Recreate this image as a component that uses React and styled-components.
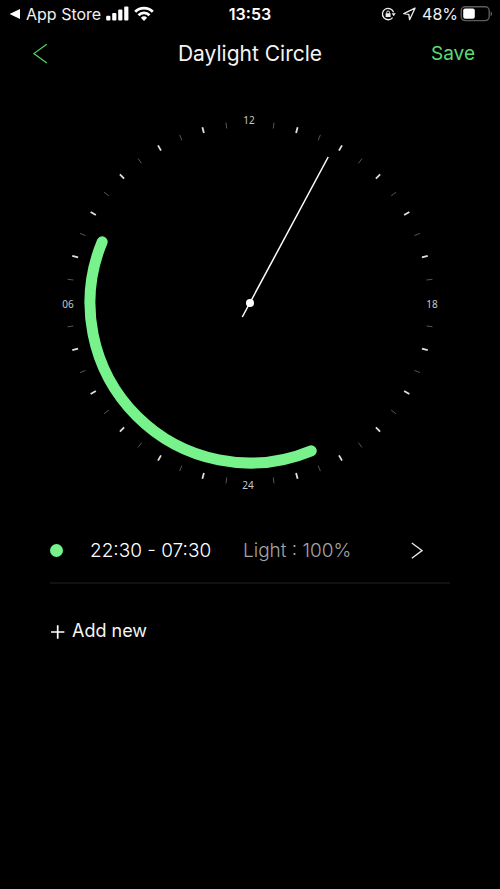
import React from 'react';
import styled, { createGlobalStyle } from 'styled-components';

const GREEN = '#78f28a';
const CENTER = 200;
const ARC_RADIUS = 160;
// the scale is slightly wider than it is tall
const SCALE_X = 181;
const SCALE_Y = 179;

const GlobalStyle = createGlobalStyle`
  * {
    box-sizing: border-box;
  }

  body {
    margin: 0;
    background: #000;
    color: #fff;
    font-family: Inter, 'Liberation Sans', sans-serif;
  }
`;

const Screen = styled.div`
  display: flex;
  flex-direction: column;
  min-height: 100vh;
`;

const StatusBar = styled.div`
  display: grid;
  grid-template-columns: 1fr auto 1fr;
  align-items: center;
  height: 28px;
  padding: 0 8px;
  font-size: 16px;
  line-height: 20px;
`;

const StatusGroup = styled.div`
  display: flex;
  align-items: center;
  justify-content: ${(props) => (props.$end ? 'flex-end' : 'flex-start')};
  gap: ${(props) => (props.$end ? 6 : 5)}px;
`;

const BackToApp = styled.a`
  display: flex;
  align-items: center;
  gap: 6px;
  color: #f0f0f0;
  text-decoration: none;
`;

const Clock = styled.time`
  font-weight: 600;
`;

const Battery = styled.span`
  display: flex;
  align-items: center;
  gap: 2px;
  color: #f0f0f0;
`;

const NavBar = styled.header`
  display: grid;
  grid-template-columns: 1fr auto 1fr;
  align-items: center;
  height: 52px;
  padding: 0 25px;
`;

const Title = styled.h1`
  margin: 0;
  color: #f4f4f4;
  font-size: 21px;
  font-weight: 400;
  line-height: 28px;
`;

const NavButton = styled.button`
  display: flex;
  justify-self: ${(props) => (props.$end ? 'end' : 'start')};
  padding: ${(props) => (props.$end ? 0 : '4px 8px')};
  border: 0;
  background: none;
  color: #5ddc74;
  font: inherit;
  font-size: 19px;
  line-height: 28px;
  cursor: pointer;
`;

const Content = styled.main`
  display: flex;
  flex-direction: column;
  padding: 23px 10% 0;
`;

const Dial = styled.svg`
  display: block;
  width: 100%;

  text {
    fill: #c8c8c8;
    font-family: 'Noto Sans', 'Open Sans', sans-serif;
    font-size: 10px;
    text-anchor: middle;
  }
`;

const Periods = styled.ul`
  margin: 16px 0 0;
  padding: 0;
  list-style: none;
`;

const Period = styled.li`
  border-bottom: 2px solid #111;
`;

const PeriodButton = styled.button`
  display: grid;
  grid-template-columns: 40px 153px 1fr auto;
  align-items: center;
  width: 100%;
  height: 63px;
  padding: 0 27px 0 0;
  border: 0;
  background: none;
  color: #fff;
  font: inherit;
  font-size: 19px;
  font-weight: 300;
  line-height: 24px;
  text-align: left;
  cursor: pointer;
`;

const Dot = styled.span`
  width: 13px;
  height: 13px;
  border-radius: 50%;
  background: ${GREEN};
`;

const Light = styled.span`
  color: #a4a4a4;
`;

const AddButton = styled.button`
  display: flex;
  align-items: center;
  align-self: flex-start;
  gap: 7px;
  margin-top: 35px;
  padding: 0;
  border: 0;
  background: none;
  color: #f4f4f4;
  font: inherit;
  font-size: 18px;
  line-height: 24px;
  cursor: pointer;
`;

const SignalIcon = () => (
  <svg width="23" height="16" viewBox="0 0 23 16" fill="#fff" aria-hidden="true">
    <rect x="0.2" y="9.8" width="4.2" height="4.6" rx="1" />
    <rect x="6.2" y="7" width="4.2" height="7.4" rx="1" />
    <rect x="12.2" y="3.6" width="4.2" height="10.8" rx="1" />
    <rect x="18.2" y="0.6" width="4.2" height="13.8" rx="1" />
  </svg>
);

const WifiIcon = () => (
  <svg width="20" height="16" viewBox="0 0 20 16" aria-hidden="true">
    <g fill="none" stroke="#fff" strokeWidth="2.8">
      <path d="M1.2 5.7a12.6 12.6 0 0 1 17.6 0" />
      <path d="M4.5 9.2a7.9 7.9 0 0 1 11 0" />
    </g>
    <path d="M10 15 6.9 11.8a4.5 4.5 0 0 1 6.2 0z" fill="#fff" />
  </svg>
);

const RotationLockIcon = () => (
  <svg width="15" height="14" viewBox="0 0 15 14" fill="none" stroke="#eee" aria-hidden="true">
    <path d="M12.6 5.4A5.7 5.7 0 1 0 11.6 10.6" strokeWidth="1.3" />
    <path d="M10.6 6.2h4.2l-2.1 3z" fill="#eee" stroke="none" />
    <path d="M5.7 6.6V5.4a1.4 1.4 0 0 1 2.8 0v1.2" strokeWidth="1" />
    <rect x="4.6" y="6.2" width="5" height="3.8" rx="0.5" fill="#eee" stroke="none" />
  </svg>
);

const LocationIcon = () => (
  <svg width="14" height="14" viewBox="0 0 14 14" fill="none" stroke="#eee" strokeWidth="1.3" strokeLinejoin="round" aria-hidden="true">
    <path d="M13 1.2 1.8 6.7l5 .6.8 5.4z" />
  </svg>
);

const BatteryIcon = () => (
  <svg width="32" height="16" viewBox="0 0 32 16" aria-hidden="true">
    <rect x="1.2" y="0.8" width="28" height="13.8" rx="4" fill="none" stroke="#5c5c5c" strokeWidth="1.4" />
    <rect x="3.2" y="2.6" width="11.6" height="10.2" rx="2" fill="#fff" />
    <path d="M30.6 5.2a2.9 2.9 0 0 1 0 5z" fill="#5c5c5c" />
  </svg>
);

// 12 o'clock is noon, and the hours run clockwise through 18, 24 and 06
const pointAt = (degrees, radiusX, radiusY = radiusX) => {
  const angle = (degrees * Math.PI) / 180;
  return [CENTER + radiusX * Math.sin(angle), CENTER - radiusY * Math.cos(angle)];
};

const ticks = Array.from({ length: 48 }, (_, i) => i).filter((i) => i % 12 !== 0);

const DaylightDial = () => {
  const [startX, startY] = pointAt(157.5, ARC_RADIUS);
  const [endX, endY] = pointAt(292.5, ARC_RADIUS);

  return (
    <Dial viewBox="0 0 400 400" role="img" aria-label="Light is on from 22:30 to 07:30">
      {ticks.map((i) => {
        const major = i % 2 === 0;
        const [x1, y1] = pointAt(i * 7.5, SCALE_X - 3, SCALE_Y - 3);
        const [x2, y2] = pointAt(i * 7.5, SCALE_X + 3, SCALE_Y + 3);
        return (
          <line
            key={i}
            x1={x1}
            y1={y1}
            x2={x2}
            y2={y2}
            stroke={major ? '#e0e0e0' : '#565656'}
            strokeWidth={major ? 1.8 : 1}
          />
        );
      })}
      <text x="199" y="21">12</text>
      <text x="382" y="205">18</text>
      <text x="198" y="386">24</text>
      <text x="18" y="205">06</text>
      <path
        d={`M${startX} ${startY}A${ARC_RADIUS} ${ARC_RADIUS} 0 0 1 ${endX} ${endY}`}
        fill="none"
        stroke={GREEN}
        strokeWidth="11"
        strokeLinecap="round"
      />
      <line x1="192.3" y1="214" x2="278.2" y2="54" stroke="#fff" strokeWidth="1.5" />
      <circle cx="200" cy="200" r="4" fill="#fff" />
    </Dial>
  );
};

const App = () => {
  return (
    <Screen>
      <GlobalStyle />
      <StatusBar>
        <StatusGroup>
          <BackToApp href="#">
            <svg width="12" height="12" viewBox="0 0 12 12" fill="#fff" aria-hidden="true">
              <path d="M1.6 6 12 1v10z" />
            </svg>
            App Store
          </BackToApp>
          <SignalIcon />
          <WifiIcon />
        </StatusGroup>
        <Clock>13:53</Clock>
        <StatusGroup $end>
          <RotationLockIcon />
          <LocationIcon />
          <Battery>
            48%
            <BatteryIcon />
          </Battery>
        </StatusGroup>
      </StatusBar>

      <NavBar>
        <NavButton aria-label="Back">
          <svg width="15" height="20" viewBox="0 0 15 20" fill="none" stroke="#4fd467" strokeWidth="1.2" aria-hidden="true">
            <path d="M13.8 0.2 0.8 9.6l13 9.4" />
          </svg>
        </NavButton>
        <Title>Daylight Circle</Title>
        <NavButton $end>Save</NavButton>
      </NavBar>

      <Content>
        <DaylightDial />
        <Periods>
          <Period>
            <PeriodButton>
              <Dot />
              <span>22:30 - 07:30</span>
              <Light>Light : 100%</Light>
              <svg width="12" height="18" viewBox="0 0 12 18" fill="none" stroke="#eee" strokeWidth="1.3" aria-hidden="true">
                <path d="M0.8 1 11 8.6 0.8 16.2" />
              </svg>
            </PeriodButton>
          </Period>
        </Periods>
        <AddButton>
          <svg width="15" height="15" viewBox="0 0 15 15" stroke="#fff" strokeWidth="1.7" aria-hidden="true">
            <path d="M1 8h13.4M7.7 1.3v13.4" />
          </svg>
          Add new
        </AddButton>
      </Content>
    </Screen>
  );
};

export default App;
